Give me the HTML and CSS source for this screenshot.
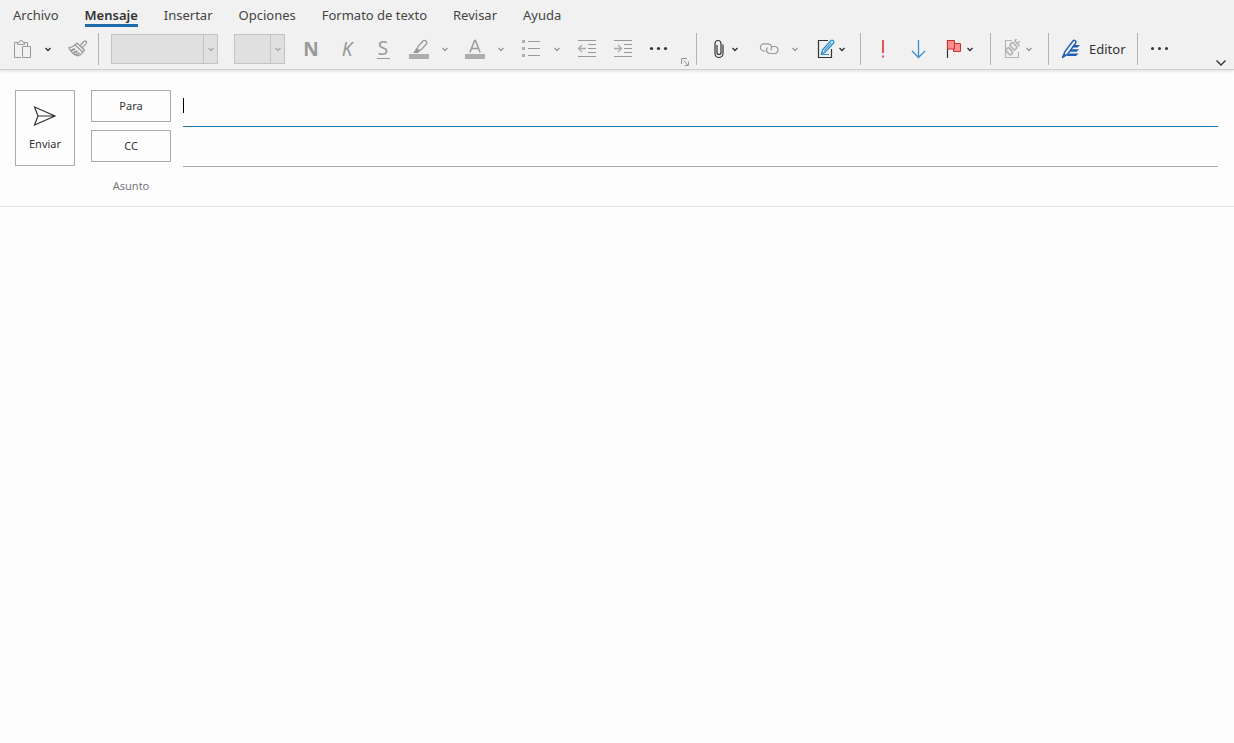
FILE: index.html
```html
<!DOCTYPE html>
<html lang="es">
<head>
<meta charset="utf-8">
<meta name="viewport" content="width=device-width, initial-scale=1">
<title>Mensaje nuevo</title>
<link rel="stylesheet" href="styles.css">
</head>
<body>
<svg class="defs" aria-hidden="true">
  <symbol id="chev" viewBox="0 0 8 8"><path d="M1.500 3 4 5.500l2.500-2.500" fill="none" stroke="currentColor" stroke-width="1.400"/></symbol>
</svg>
<header class="ribbon">
  <nav class="tabs">
    <a class="tab" href="#archivo">Archivo</a>
    <a class="tab tab-active" href="#mensaje">Mensaje</a>
    <a class="tab" href="#insertar">Insertar</a>
    <a class="tab" href="#opciones">Opciones</a>
    <a class="tab" href="#formato">Formato de texto</a>
    <a class="tab" href="#revisar">Revisar</a>
    <a class="tab" href="#ayuda">Ayuda</a>
  </nav>
  <div class="toolbar">
    <div class="group clipboard">
      <div class="split">
        <button class="tool dim" aria-label="Pegar"><svg class="icon" viewBox="0 0 20 20"><g fill="none" stroke="currentColor"><path d="M9 18.500H2.500V3.500H6M12 3.500h3.500V7"/><path d="M5.500 5.500V3.500H7a2 2 0 0 1 4 0h1.500v2z"/><path d="M10.500 7.500h8v11h-8z"/></g></svg></button>
        <button class="drop" aria-label="Opciones de pegado"><svg class="chev"><use href="#chev"/></svg></button>
      </div>
      <button class="tool dim" aria-label="Copiar formato"><svg class="icon" viewBox="0 0 20 20"><g fill="none" stroke="currentColor" stroke-width="1.200" stroke-linejoin="round"><path d="m12 6.500 4-4q1.300-1 2.200 0t0 2.200l-4 4"/><path d="m9 4 7.500 7-1.700 2L7 6z"/><path d="M7 6Q4.500 8 .8 8.800 4 15.500 10 17q3.500-1.500 4.800-4"/><path d="m3 11.500 4-1.500M5.500 14l4-1.800M8 16l3.500-2" stroke-width="2"/></g></svg></button>
    </div>
    <span class="sep"></span>
    <div class="combos">
      <button class="combo combo-font" aria-label="Fuente"><span class="combo-drop"><svg class="chev"><use href="#chev"/></svg></span></button>
      <button class="combo combo-size" aria-label="Tamaño de fuente"><span class="combo-drop"><svg class="chev"><use href="#chev"/></svg></span></button>
    </div>
    <div class="group format">
      <div class="letters">
        <button class="tool letter bold">N</button>
        <button class="tool letter italic">K</button>
        <button class="tool letter"><span class="under">S</span></button>
      </div>
      <div class="split">
        <button class="tool dim" aria-label="Color de resaltado"><svg class="icon" viewBox="0 0 20 20"><path d="M0 15h20v5H0z" fill="#adadad"/><path d="m9 7.500 5-5.500q1.500-1.200 3 0t.3 3l-5 5.700-3.300.8-1-1z" fill="none" stroke="currentColor" stroke-width="1.300"/><path d="m7.500 9 3.500 3.200L9 14H4z" fill="currentColor"/></svg></button>
        <button class="drop dim" aria-label="Más colores de resaltado"><svg class="chev"><use href="#chev"/></svg></button>
      </div>
      <div class="split">
        <button class="tool dim" aria-label="Color de fuente"><svg class="icon" viewBox="0 0 20 20"><path d="M0 15h20v5H0z" fill="#adadad"/><path d="M4.800 13.500 9.600 1.500h.8l4.800 12M6.500 9.500h7" fill="none" stroke="currentColor" stroke-width="1.500"/></svg></button>
        <button class="drop dim" aria-label="Más colores de fuente"><svg class="chev"><use href="#chev"/></svg></button>
      </div>
      <div class="split">
        <button class="tool dim" aria-label="Viñetas"><svg class="icon" viewBox="0 0 20 20"><path d="M1 1h3v3H1zM1 8h3v3H1zM1 15h3v3H1z" fill="#b0b0b0"/><path d="M7 2.500h12M7 9.500h12M7 16.500h12" stroke="currentColor"/></svg></button>
        <button class="drop dim" aria-label="Más viñetas"><svg class="chev"><use href="#chev"/></svg></button>
      </div>
      <div class="letters">
        <button class="tool dim" aria-label="Disminuir sangría"><svg class="icon" viewBox="0 0 20 20"><path d="M1 1.500h18M11 5.500h8M11 9.500h8M11 13.500h8M1 17.500h18" stroke="currentColor"/><path d="M9 9.500H1.500M5 6 1.500 9.500 5 13" fill="none" stroke="#aaa" stroke-width="1.300"/></svg></button>
        <button class="tool dim" aria-label="Aumentar sangría"><svg class="icon" viewBox="0 0 20 20"><path d="M1 1.500h18M11 5.500h8M11 9.500h8M11 13.500h8M1 17.500h18" stroke="currentColor"/><path d="M1 9.500h7.500M5 6l3.500 3.500L5 13" fill="none" stroke="#aaa" stroke-width="1.300"/></svg></button>
        <button class="tool" aria-label="Más opciones de formato"><svg class="icon" viewBox="0 0 20 20"><g fill="currentColor"><circle cx="2.500" cy="9.500" r="1.600"/><circle cx="9.500" cy="9.500" r="1.600"/><circle cx="16.500" cy="9.500" r="1.600"/></g></svg></button>
      </div>
    </div>
    <button class="launcher" aria-label="Configuración de fuente"><svg class="launcher-icon" viewBox="0 0 10 10"><path d="M1.500 7V1.500H7M3.500 3.500l4.500 4.500M8.500 4.500v4h-4" fill="none" stroke="currentColor"/></svg></button>
    <span class="sep"></span>
    <div class="group wide">
      <div class="split">
        <button class="tool slim" aria-label="Adjuntar archivo"><svg class="icon" viewBox="0 0 20 20"><path d="M8 6v7.500a2 2 0 0 0 4 0V4.500a3 3 0 0 0-6 0v10a4 4 0 0 0 8 0V5.500" fill="none" stroke="currentColor" stroke-width="1.200"/></svg></button>
        <button class="drop slim-drop" aria-label="Opciones de adjuntos"><svg class="chev"><use href="#chev"/></svg></button>
      </div>
      <div class="split">
        <button class="tool mid dim" aria-label="Vínculo"><svg class="icon" viewBox="0 0 20 20"><g fill="none" stroke="currentColor" stroke-width="1.200"><path d="M6.500 12H5a3.600 3.600 0 0 1 0-7.200h4A3.600 3.600 0 0 1 11.500 11"/><path d="M13 7.500h2.500a3.500 3.500 0 0 1 0 7h-4.500A3.500 3.500 0 0 1 8.500 8.500"/></g></svg></button>
        <button class="drop wide-drop dim" aria-label="Opciones de vínculo"><svg class="chev"><use href="#chev"/></svg></button>
      </div>
      <div class="split signature">
        <button class="tool slim" aria-label="Firma"><svg class="icon" viewBox="0 0 20 20"><path d="M12 1.500H2.500v17h13V10" fill="none" stroke="currentColor" stroke-width="1.200"/><path d="m6.500 11 8.300-9.300q1.300-1 2.400 0t.3 2.300L9 13.200l-3.500 1.500z" fill="#fafafa" stroke="#2e8fd0" stroke-width="1.400"/><path d="m8 12 7.500-8.500M5 15.500h8" fill="none" stroke="#2e8fd0" stroke-width="1.100"/></svg></button>
        <button class="drop slim-drop" aria-label="Opciones de firma"><svg class="chev"><use href="#chev"/></svg></button>
      </div>
    </div>
    <span class="sep"></span>
    <div class="group flags">
      <div class="letters">
        <button class="tool" aria-label="Importancia alta"><svg class="icon" viewBox="0 0 20 20"><path d="M9 1h2v13H9zM9 16.500h2v2H9z" fill="#e8534f"/></svg></button>
        <button class="tool" aria-label="Importancia baja"><svg class="icon" viewBox="0 0 20 20"><path d="M9.500 1v17M3 12l6.500 6.500L16 12" fill="none" stroke="#3a8fcf" stroke-width="1.300"/></svg></button>
      </div>
      <div class="split">
        <button class="tool slim" aria-label="Seguimiento"><svg class="icon" viewBox="0 0 20 20"><path d="M3.500 1v18" stroke="#333" stroke-width="1.200"/><path d="M9.500 4.500h7v8h-7z" fill="#ff8b8d" stroke="#c9302c"/><path d="M3.500 1.500h7v8.500h-7z" fill="#ff8b8d" stroke="#c9302c"/></svg></button>
        <button class="drop slim-drop" aria-label="Opciones de seguimiento"><svg class="chev"><use href="#chev"/></svg></button>
      </div>
    </div>
    <span class="sep"></span>
    <div class="split templates">
      <button class="tool slim" aria-label="Plantillas"><svg class="icon" viewBox="0 0 20 20"><g fill="none" stroke="#b4b4b4"><path d="M9 1.500H2.500v17h13V13" stroke-width="1.200"/><g transform="rotate(-42 10 9)" stroke-width="1.700"><rect x="3" y="5.500" width="4" height="7" rx="1"/><rect x="9.500" y="4.500" width="4" height="7" rx="1"/><path d="M16 12V6.500q0-2 2-2h1.500M16 8.500h3.500"/></g></g></svg></button>
      <button class="drop slim-drop dim" aria-label="Opciones de plantillas"><svg class="chev"><use href="#chev"/></svg></button>
    </div>
    <span class="sep"></span>
    <button class="editor"><svg class="icon" viewBox="0 0 20 20"><path d="M1.500 18.500 4 12.500l8-10.500q1.200-1.200 2.300-.3t.4 2.300L7 14.500z" fill="#f8f8f8" stroke="#1f5fb4" stroke-width="1.400" stroke-linejoin="round"/><path d="M13 6h6l-2.500 2.500h-5.500zM10.500 10.300h7.500l-2.500 2.500H8.500zM8 14.600h9.500L15 17H5zM1 19l2-5 2.500 2.700z" fill="#1f5fb4"/></svg>Editor</button>
    <span class="sep"></span>
    <button class="tool overflow" aria-label="Más comandos"><svg class="icon" viewBox="0 0 20 20"><g fill="currentColor"><circle cx="2.500" cy="9.500" r="1.500"/><circle cx="9.500" cy="9.500" r="1.500"/><circle cx="16.500" cy="9.500" r="1.500"/></g></svg></button>
    <button class="collapse" aria-label="Contraer cinta"><svg class="collapse-icon" viewBox="0 0 12 8"><path d="m1.500 1.500 4.500 4.500 4.500-4.500" fill="none" stroke="currentColor" stroke-width="1.400"/></svg></button>
  </div>
</header>
<main class="compose">
  <form class="envelope">
    <button type="button" class="send"><svg class="send-icon" viewBox="0 0 24 20"><path d="M1.500 1 22 10 1.500 19 5 10zM5 10h17" fill="none" stroke="#333" stroke-width="1.200"/></svg>Enviar</button>
    <div class="fields">
      <div class="row">
        <button type="button" class="recipient">Para</button>
        <div class="entry focused"><input class="line" type="text" aria-label="Para"><span class="caret"></span></div>
      </div>
      <div class="row">
        <button type="button" class="recipient">CC</button>
        <div class="entry"><input class="line" type="text" aria-label="CC"></div>
      </div>
      <div class="row">
        <label class="subject" for="asunto">Asunto</label>
        <div class="entry plain"><input class="line" type="text" id="asunto"></div>
      </div>
    </div>
  </form>
  <textarea class="message" aria-label="Cuerpo del mensaje"></textarea>
</main>
</body>
</html>
```
FILE: styles.css
```css
* { box-sizing: border-box; }
body {
  margin: 0;
  min-height: 100vh;
  display: flex;
  flex-direction: column;
  background: #fdfdfd;
  color: #333;
  font: 13px/16px "Noto Sans", "Open Sans", sans-serif;
}
button {
  padding: 0;
  border: 0;
  background: none;
  color: inherit;
  font: inherit;
}
svg { display: block; flex: none; }
.defs { position: absolute; width: 0; height: 0; }
.ribbon {
  background: #f1f1f1;
  border-bottom: 1px solid #cfcfcf;
  box-shadow: 0 1px 3px #ddd;
}
.tabs {
  display: flex;
  gap: 26px;
  padding: 6px 13px 0;
}
.tab {
  height: 21px;
  color: #444;
  line-height: 18px;
  text-decoration: none;
  border-bottom: 3px solid transparent;
}
.tab-active {
  color: #333;
  font-weight: 600;
  border-color: #1e6bb0;
}
.toolbar {
  display: flex;
  align-items: center;
  height: 42px;
  padding: 2px 7px 0 4px;
  color: #333;
}
.group, .split, .letters, .combos { display: flex; align-items: center; }
.group { gap: 4px; }
.wide { gap: 12px; }
.signature { margin: 0 1px 0 -1px; }
.flags { gap: 7px; margin: 0 3px 0 -8px; }
.templates { margin-right: 2px; }
.clipboard { margin-right: -9px; }
.format { margin-left: 8px; }
.format .letters:first-child { margin-right: -4px; }
.combos { gap: 16px; }
.tool {
  display: flex;
  align-items: center;
  justify-content: center;
  width: 36px;
  height: 32px;
}
.slim { width: 20px; }
.mid { width: 32px; }
.icon { width: 20px; height: 20px; }
.drop {
  display: flex;
  align-items: center;
  justify-content: center;
  width: 16px;
  height: 32px;
}
.slim-drop { width: 12px; }
.wide-drop { width: 20px; }
.chev { width: 8px; height: 8px; }
.dim { color: #999; }
.sep {
  width: 1px;
  height: 32px;
  margin: 0 12px 0 11px;
  background: #b3b3b3;
}
.combo {
  display: flex;
  justify-content: flex-end;
  height: 30px;
  border: 1px solid #c3c3c3;
  background: #e0e0e0;
  color: #aaa;
}
.combo-font { width: 107px; }
.combo-size { width: 51px; }
.combo-drop {
  display: flex;
  align-items: center;
  justify-content: center;
  width: 14px;
  height: 28px;
  border-left: 1px solid #c3c3c3;
}
.letter { color: #999; font-size: 19px; line-height: 20px; }
.bold { font-weight: 700; }
.italic { font-style: italic; }
.under { width: 13px; height: 19px; line-height: 17px; border-bottom: 1px solid #999; }
.launcher {
  align-self: flex-end;
  width: 12px;
  height: 12px;
  margin: 0 -6px 1px 2px;
  color: #999;
}
.launcher-icon { width: 10px; height: 10px; margin: 0 auto; }
.editor {
  display: flex;
  align-items: center;
  gap: 8px;
  height: 32px;
}
.overflow { margin-left: -8px; }
.collapse { align-self: flex-end; margin: 0 0 2px auto; }
.collapse-icon { width: 12px; height: 8px; }
.compose { flex: 1; display: flex; flex-direction: column; }
.envelope {
  display: flex;
  align-items: flex-start;
  gap: 16px;
  padding: 17px 16px 0 15px;
  border-bottom: 1px solid #e1e1e1;
}
.send {
  display: flex;
  flex-direction: column;
  align-items: center;
  justify-content: center;
  gap: 10px;
  width: 60px;
  height: 76px;
  margin-top: 3px;
  padding-top: 2px;
  border: 1px solid #ababab;
  font-size: 11px;
}
.send-icon { width: 24px; height: 20px; }
.fields { flex: 1; }
.row { display: flex; gap: 12px; height: 40px; }
.row:last-child { height: 39px; }
.recipient {
  width: 80px;
  height: 32px;
  margin-top: 3px;
  border: 1px solid #ababab;
  font-size: 11px;
}
.subject {
  width: 80px;
  padding-top: 11px;
  color: #777;
  font-size: 11px;
  text-align: center;
}
.entry {
  position: relative;
  flex: 1;
  display: flex;
  border-bottom: 1px solid #ababab;
}
.focused { border-color: #1a77ab; }
.plain { border: 0; }
.line {
  flex: 1;
  width: 100%;
  padding: 0;
  border: 0;
  outline: 0;
  background: none;
  font: inherit;
}
.caret {
  position: absolute;
  left: 0;
  top: 11px;
  width: 1px;
  height: 15px;
  background: #000;
}
.message {
  flex: 1;
  width: 100%;
  padding: 12px 16px;
  border: 0;
  outline: 0;
  resize: none;
  background: none;
  font: inherit;
}
```
